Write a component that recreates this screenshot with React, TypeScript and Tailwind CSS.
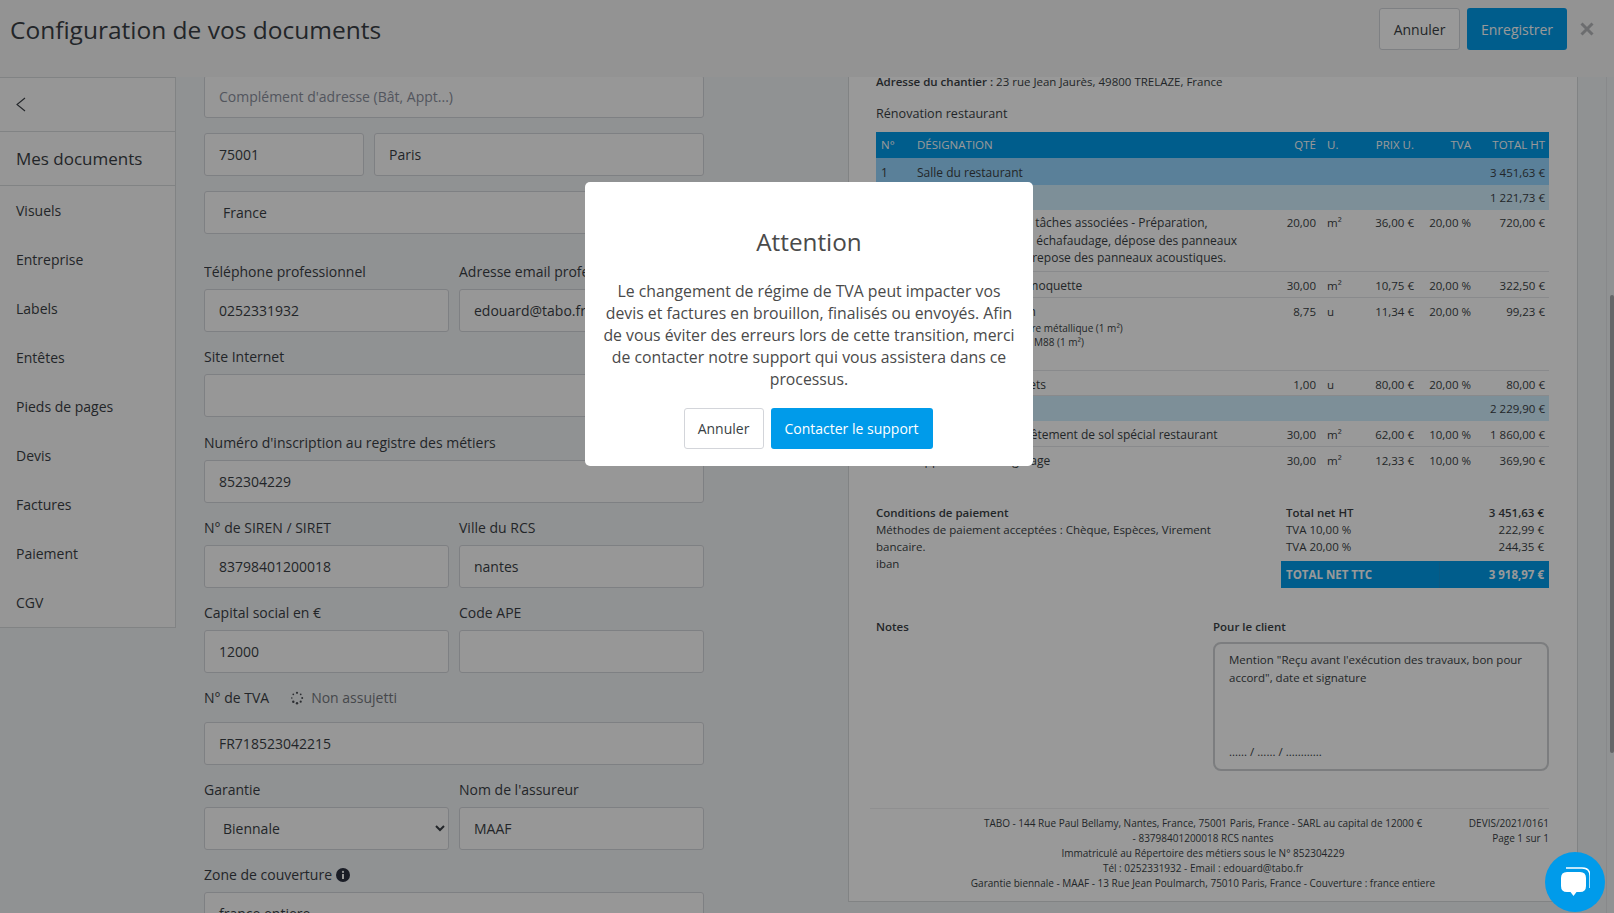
const sans = "font-['Open_Sans',sans-serif]";

const navItems = ["Visuels", "Entreprise", "Labels", "Entêtes", "Pieds de pages", "Devis", "Factures", "Paiement", "CGV"];

// champ de saisie du formulaire
function Field({ value, placeholder, className = "" }: { value?: string; placeholder?: string; className?: string }) {
  return (
    <div className={`h-[43px] flex items-center px-[14px] bg-[#fcfcfc] border border-[#d3d5da] rounded-[3px] text-[14px] text-[#3a3f45] ${className}`}>
      {value ?? <span className="text-[#8a8f9c]">{placeholder}</span>}
    </div>
  );
}

function SelectField({ value }: { value: string }) {
  return (
    <select defaultValue={value} className="w-full h-[43px] px-[14px] bg-[#fcfcfc] border border-[#d3d5da] rounded-[3px] text-[14px] text-[#3a3f45]">
      <option>{value}</option>
    </select>
  );
}

function Label({ children, className = "" }: { children: React.ReactNode; className?: string }) {
  return <div className={`h-[17px] mb-[9px] leading-[17px] text-[14px] text-[#3a3f45] ${className}`}>{children}</div>;
}

function LabeledField({ label, value }: { label: string; value?: string }) {
  return (
    <div className="flex-1 min-w-0">
      <Label>{label}</Label>
      <Field value={value ?? ""} />
    </div>
  );
}

type Row = {
  design: string[];
  sub?: string[];
  qty?: string;
  unit?: string;
  price?: string;
  tva?: string;
  total: string;
  num?: string;
  tone?: string;
  h: string;
  pt: string;
};

const rows: Row[] = [
  { num: "1", design: ["Salle du restaurant"], total: "3 451,63 €", tone: "bg-[#96d6ff]", h: "h-[27px]", pt: "pt-[6px]" },
  { num: "1.1", design: ["Plafond"], total: "1 221,73 €", tone: "bg-[#d0eefd]", h: "h-[25px]", pt: "pt-[4px]" },
  { design: ["Plafond suspendu et tâches associées - Préparation,", "puis installation d'un échafaudage, dépose des panneaux", "panneaux existants, repose des panneaux acoustiques."], qty: "20,00", unit: "m²", price: "36,00 €", tva: "20,00 %", total: "720,00 €", h: "h-[62px]", pt: "pt-[4px]" },
  { design: ["Dépose de la vieille moquette"], qty: "30,00", unit: "m²", price: "10,75 €", tva: "20,00 %", total: "322,50 €", h: "h-[26px]", pt: "pt-[5px]" },
  { design: ["Fourniture de cloison"], sub: ["Plaques BA13 sur ossature métallique (1 m²)", "Laine minérale et isolant M88 (1 m²)"], qty: "8,75", unit: "u", price: "11,34 €", tva: "20,00 %", total: "99,23 €", h: "h-[73px]", pt: "pt-[5px]" },
  { design: ["Pose de spots et objets"], qty: "1,00", unit: "u", price: "80,00 €", tva: "20,00 %", total: "80,00 €", h: "h-[25px]", pt: "pt-[5px]" },
  { num: "1.2", design: ["Sol"], total: "2 229,90 €", tone: "bg-[#d0eefd]", h: "h-[25px]", pt: "pt-[4px]" },
  { design: ["Dépose, pose de revêtement de sol spécial restaurant"], qty: "30,00", unit: "m²", price: "62,00 €", tva: "10,00 %", total: "1 860,00 €", h: "h-[26px]", pt: "pt-[5px]" },
  { design: ["Application du ragréage"], qty: "30,00", unit: "m²", price: "12,33 €", tva: "10,00 %", total: "369,90 €", h: "h-[25px]", pt: "pt-[5px]" },
];

function QuoteRow({ row, last }: { row: Row; last: boolean }) {
  const line = row.tone || last ? row.tone ?? "" : "border-b border-[#e4e6e9]";
  return (
    <div className={`flex text-[11.5px] leading-[17.5px] text-[#3a3f45] ${row.h} ${row.pt} ${line}`}>
      <div className="w-[41px] pl-[5px] shrink-0 text-[12px]">{row.num}</div>
      <div className="w-[358px] shrink-0 text-[12px]">
        {row.design.map((l) => <div key={l}>{l}</div>)}
        {row.sub?.map((l) => <div key={l} className="text-[10px] leading-[14px]">{l}</div>)}
      </div>
      <div className="w-[41px] text-right shrink-0">{row.qty}</div>
      <div className="w-[46px] pl-[11px] shrink-0">{row.unit}</div>
      <div className="w-[52px] text-right shrink-0">{row.price}</div>
      <div className="w-[57px] text-right shrink-0">{row.tva}</div>
      <div className="w-[74px] text-right shrink-0">{row.total}</div>
    </div>
  );
}

export default function App() {
  return (
    <div className={`${sans} relative h-[913px] w-[1614px] overflow-hidden bg-[#f1f3f5] flex flex-col`}>
      <header className="h-[77px] shrink-0 flex items-start bg-[#f5f5f6] pl-[10px] pr-[20px] pt-[8px]">
        <h1 className="flex-1 text-[24.5px] leading-[44px] text-[#3a3f45]">Configuration de vos documents</h1>
        <button className="h-[42px] w-[81px] border border-[#d3d5da] rounded-[3px] bg-white text-[14px] text-[#3a3f45]">Annuler</button>
        <button className="h-[42px] w-[100px] ml-[7px] rounded-[3px] bg-[#009bea] text-[14px] text-white">Enregistrer</button>
        <svg className="ml-[13px] mt-[14px]" width="14" height="14" viewBox="0 0 14 14">
          <path d="M1.5 1.5 L12.5 12.5 M12.5 1.5 L1.5 12.5" stroke="#b4b6b9" strokeWidth="3" />
        </svg>
      </header>

      <div className="flex-1 flex min-h-0">
        <aside className="w-[176px] h-[551px] shrink-0 bg-[#fafafa] border border-l-0 border-[#d8dadd] flex flex-col">
          <div className="h-[54px] flex items-center pl-[16px] border-b border-[#d8dadd]">
            <svg width="10" height="15" viewBox="0 0 10 15" fill="none">
              <path d="M9 1 L1 7.5 L9 14" stroke="#3a3f45" strokeWidth="1.1" />
            </svg>
          </div>
          <div className="h-[54px] flex items-center pl-[16px] border-b border-[#d8dadd] text-[17px] text-[#3a3f45]">Mes documents</div>
          {navItems.map((item) => (
            <div key={item} className="h-[49px] flex items-center pl-[16px] text-[14px] text-[#3a3f45]">{item}</div>
          ))}
        </aside>

        <main className="w-[500px] ml-[28px] shrink-0 overflow-hidden">
          <div className="-mt-[2px] flex flex-col">
            <Field placeholder="Complément d'adresse (Bât, Appt...)" />
            <div className="flex gap-[10px] mt-[15px]">
              <Field value="75001" className="w-[160px]" />
              <Field value="Paris" className="flex-1" />
            </div>
            <div className="mt-[15px]"><SelectField value="France" /></div>
            <div className="flex gap-[10px] mt-[29px]">
              <LabeledField label="Téléphone professionnel" value="0252331932" />
              <LabeledField label="Adresse email professionnelle" value="edouard@tabo.fr" />
            </div>
            <div className="mt-[16px]"><LabeledField label="Site Internet" /></div>
            <div className="mt-[17px]"><LabeledField label="Numéro d'inscription au registre des métiers" value="852304229" /></div>
            <div className="flex gap-[10px] mt-[16px]">
              <LabeledField label="N° de SIREN / SIRET" value="83798401200018" />
              <LabeledField label="Ville du RCS" value="nantes" />
            </div>
            <div className="flex gap-[10px] mt-[16px]">
              <LabeledField label="Capital social en €" value="12000" />
              <LabeledField label="Code APE" />
            </div>
            <Label className="mt-[16px] flex items-center !mb-[16px]">
              N° de TVA
              <svg className="ml-[21px]" width="14" height="14" viewBox="0 0 14 14" fill="#4a4e54">
                <circle cx="7" cy="1.8" r="1.1" />
                <circle cx="10.7" cy="3.3" r="0.9" />
                <circle cx="12.2" cy="7" r="1" />
                <circle cx="10.7" cy="10.7" r="1.1" />
                <circle cx="7" cy="12.2" r="1.2" />
                <circle cx="3.3" cy="10.7" r="1.2" />
                <circle cx="1.8" cy="7" r="0.8" />
                <circle cx="3.3" cy="3.3" r="0.9" />
              </svg>
              <span className="ml-[7px] text-[#74787e]">Non assujetti</span>
            </Label>
            <Field value="FR718523042215" />
            <div className="flex gap-[10px] mt-[16px]">
              <div className="flex-1 min-w-0">
                <Label>Garantie</Label>
                <SelectField value="Biennale" />
              </div>
              <LabeledField label="Nom de l'assureur" value="MAAF" />
            </div>
            <Label className="mt-[16px] flex items-center">
              Zone de couverture
              <svg className="ml-[4px]" width="14" height="14" viewBox="0 0 14 14">
                <circle cx="7" cy="7" r="7" fill="#2c3140" />
                <rect x="6" y="6" width="2" height="5" fill="#fcfcfc" />
                <circle cx="7" cy="3.9" r="1.1" fill="#fcfcfc" />
              </svg>
            </Label>
            <Field value="france entiere" />
          </div>
        </main>

        <section className="w-[730px] h-[825px] ml-[144px] shrink-0 bg-white border-x border-b border-[#d8dadd] pl-[27px] pr-[28px] text-[11.5px] text-[#3a3f45] overflow-hidden">
          <div className="-mt-[2px] leading-[14px]"><b className="font-semibold">Adresse du chantier :</b> 23 rue Jean Jaurès, 49800 TRELAZE, France</div>
          <div className="mt-[16px] text-[12.6px] leading-[18px]">Rénovation restaurant</div>
          <div className="mt-[9px] h-[26px] flex items-center bg-[#009bea] text-white">
            <div className="w-[41px] pl-[5px] shrink-0">N°</div>
            <div className="w-[358px] shrink-0">DÉSIGNATION</div>
            <div className="w-[41px] text-right shrink-0">QTÉ</div>
            <div className="w-[46px] pl-[11px] shrink-0">U.</div>
            <div className="w-[52px] text-right shrink-0">PRIX U.</div>
            <div className="w-[57px] text-right shrink-0">TVA</div>
            <div className="w-[74px] text-right shrink-0">TOTAL HT</div>
          </div>
          {rows.map((row, i) => <QuoteRow key={i} row={row} last={i === rows.length - 1} />)}

          <div className="flex mt-[32px]">
            <div className="w-[340px] leading-[17px]">
              <div className="font-semibold">Conditions de paiement</div>
              <div>Méthodes de paiement acceptées : Chèque, Espèces, Virement bancaire.</div>
              <div>iban</div>
            </div>
            <div className="ml-[65px] w-[268px] leading-[17px]">
              <div className="flex justify-between px-[5px] font-semibold"><span>Total net HT</span><span>3 451,63 €</span></div>
              <div className="flex justify-between px-[5px]"><span>TVA 10,00 %</span><span>222,99 €</span></div>
              <div className="flex justify-between px-[5px]"><span>TVA 20,00 %</span><span>244,35 €</span></div>
              <div className="flex items-center h-[27px] mt-[6px] bg-[#009bea] text-white font-bold">
                <div className="w-[159px] pl-[5px] border-r border-[#0f94da] leading-[26px]">TOTAL NET TTC</div>
                <div className="flex-1 text-right pr-[5px]">3 918,97 €</div>
              </div>
            </div>
          </div>

          <div className="flex mt-[30px]">
            <div className="w-[337px] font-semibold leading-[17px]">Notes</div>
            <div className="w-[336px]">
              <div className="font-semibold leading-[17px]">Pour le client</div>
              <div className="mt-[7px] h-[129px] border-2 border-[#cfd1d4] rounded-[8px] px-[14px] pt-[7px] flex flex-col justify-between">
                <div className="leading-[18px]">Mention "Reçu avant l'exécution des travaux, bon pour accord", date et signature</div>
                <div className="leading-[18px] mb-[8px]">...... / ...... / ............</div>
              </div>
            </div>
          </div>

          <div className="mt-[37px] -ml-[6px] border-t border-[#eeeff1] pt-[7px] flex text-[10px] leading-[15px]">
            <div className="ml-[90px] w-[486px] text-center">
              <div>TABO - 144 Rue Paul Bellamy, Nantes, France, 75001 Paris, France - SARL au capital de 12000 €</div>
              <div>- 83798401200018 RCS nantes</div>
              <div>Immatriculé au Répertoire des métiers sous le N° 852304229</div>
              <div>Tél : 0252331932 - Email : edouard@tabo.fr</div>
              <div>Garantie biennale - MAAF - 13 Rue Jean Poulmarch, 75010 Paris, France - Couverture : france entiere</div>
            </div>
            <div className="flex-1 text-right">
              <div>DEVIS/2021/0161</div>
              <div>Page 1 sur 1</div>
            </div>
          </div>
        </section>

        <div className="ml-[28px] w-[8px] flex justify-end shrink-0 bg-[#f1f3f5] border-l border-[#e3e5e8]">
          <div className="w-[4px] h-[458px] mt-[218px] rounded-[2px] bg-[#a8aaad]" />
        </div>
      </div>

      {/* voile + modale */}
      <div className="absolute inset-0 bg-black/40">
        <div className="absolute left-[585px] top-[182px] w-[448px] h-[284px] bg-white rounded-[5px] flex flex-col items-center px-[12px]">
          <h2 className="mt-[41px] text-[24.3px] leading-[38px] text-[#4a4a4a]">Attention</h2>
          <p className="mt-[19px] text-[15.8px] leading-[22px] text-center text-[#4a4a4a]">
            Le changement de régime de TVA peut impacter vos devis et factures en brouillon, finalisés ou envoyés. Afin de vous éviter des erreurs lors de cette transition, merci de contacter notre support qui vous assistera dans ce processus.
          </p>
          <div className="flex gap-[7px] mt-[18px] -ml-[2px]">
            <button className="h-[41px] w-[80px] bg-white border border-[#d3d5da] rounded-[3px] text-[14px] text-[#3a3f45]">Annuler</button>
            <button className="h-[41px] w-[162px] bg-[#009bea] rounded-[3px] text-[14px] text-white">Contacter le support</button>
          </div>
        </div>
      </div>

      {/* bulle de chat */}
      <button className="absolute left-[1545px] top-[852px] w-[60px] h-[60px] rounded-full bg-[#009bea] flex items-center justify-center">
        <svg width="30" height="31" viewBox="0 0 30 31" fill="none">
          <path d="M6 1 H22 Q30 1 30 9 V21" stroke="#fff" strokeWidth="1.4" />
          <path d="M7 5 H20 Q26 5 26 11 V19 Q26 25 20 25 H16.5 L13.5 29 L10.5 25 H7 Q1 25 1 19 V11 Q1 5 7 5 Z" fill="#fff" />
        </svg>
      </button>
    </div>
  );
}
